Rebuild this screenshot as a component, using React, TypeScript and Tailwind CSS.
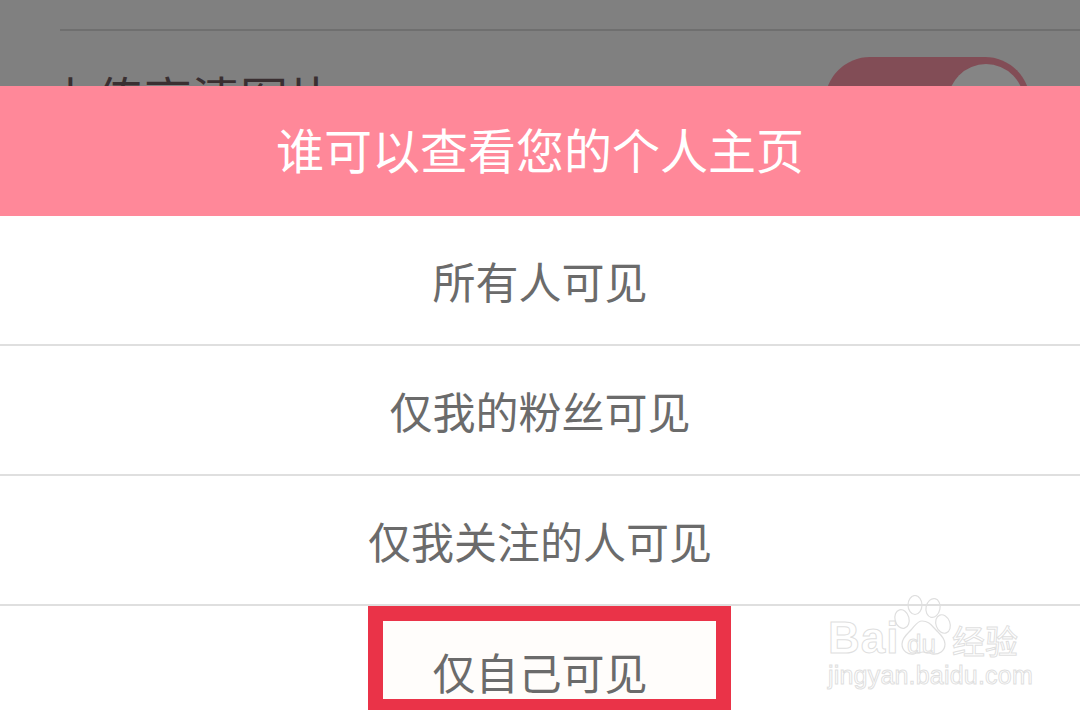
const cjk = "font-['Noto_Sans_CJK_SC','Liberation_Sans',sans-serif]";

const options = ["所有人可见", "仅我的粉丝可见", "仅我关注的人可见"];

function Watermark() {
  return (
    <div className="absolute left-[826px] top-[592px] z-20 h-[100px] w-[200px] font-['Liberation_Sans',sans-serif] text-transparent [-webkit-text-stroke:1px_#dfdfdf]">
      <svg
        className="absolute left-[64px] top-[3px]"
        width="64"
        height="64"
        viewBox="0 0 64 64"
        fill="none"
        stroke="#dfdfdf"
        strokeWidth="1.2"
      >
        <ellipse cx="25" cy="10" rx="7" ry="9.5" />
        <ellipse cx="43" cy="13" rx="7" ry="9.5" transform="rotate(12 43 13)" />
        <ellipse cx="12" cy="24" rx="7" ry="9.5" transform="rotate(-15 12 24)" />
        <ellipse cx="53" cy="29" rx="7" ry="9.5" transform="rotate(-20 53 29)" />
        <path d="M32 26c-5 0-7 5-11 9-4 4-9 8-9 14 0 7 6 11 12 10 3-1 6-2 9-2s6 1 9 2c7 1 13-3 13-10 0-6-5-10-9-14-4-4-7-9-14-9z" />
      </svg>
      <span className="absolute left-[2px] top-[22px] text-[44px] font-bold leading-[48px] tracking-[1px]">
        Bai
      </span>
      <span className="absolute left-[81px] top-[37px] text-[26px] leading-[30px]">du</span>
      <span className={`absolute left-[126px] top-[30px] text-[33px] leading-[36px] ${cjk}`}>经验</span>
      <span className="absolute left-[2px] top-[69px] text-[25px] leading-[28px] tracking-[0.2px]">
        jingyan.baidu.com
      </span>
    </div>
  );
}

export default function App() {
  return (
    <div className={`relative h-[710px] w-[1080px] overflow-hidden bg-white ${cjk}`}>
      {/* dimmed settings page behind the dialog */}
      <div className="h-[86px] overflow-hidden bg-[#808080] pl-[60px] pt-[29px]">
        <div className="flex items-start justify-between border-t-2 border-[#6f6f6f] pr-[50px]">
          <span className="-ml-[12px] mt-[35px] text-[48px] leading-[60px] text-[#3a2f31]">上传高清图片</span>
          <div className="mt-[26px] flex h-[90px] w-[205px] shrink-0 items-center justify-end rounded-full bg-[#824d56] pr-[6px]">
            <div className="h-[76px] w-[76px] rounded-full bg-[#858585]" />
          </div>
        </div>
      </div>

      <div className="flex h-[130px] items-center justify-center bg-[#ff8899] pb-[6px]">
        <span className="text-[48px] text-white">谁可以查看您的个人主页</span>
      </div>

      {options.map((label) => (
        <div
          key={label}
          className="flex h-[130px] items-center justify-center border-b-2 border-[#dfdfdf] text-[43px] text-[#6b6b6b]"
        >
          {label}
        </div>
      ))}

      <div className="relative flex h-[130px] items-center justify-center text-[43px] text-[#6b6b6b]">
        <div className="absolute left-[368px] top-0 h-[108px] w-[363px] border-[15px] border-[#ea3348] bg-[#fffdfb]" />
        <span className="relative z-10">仅自己可见</span>
      </div>

      <Watermark />
    </div>
  );
}
